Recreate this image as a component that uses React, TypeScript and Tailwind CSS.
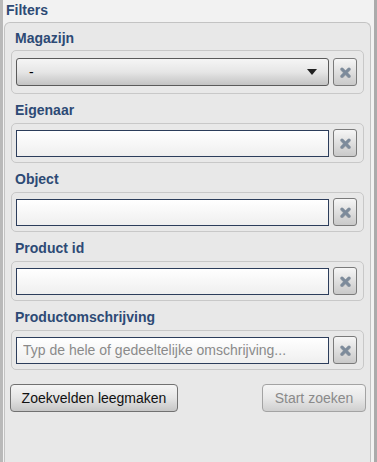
import React from 'react'

const fields = [
    { label: "Eigenaar", placeholder: "" },
    { label: "Object", placeholder: "" },
    { label: "Product id", placeholder: "" },
    { label: "Productomschrijving", placeholder: "Typ de hele of gedeeltelijke omschrijving..." },
]

const ClearButton = () => (
    <button className="flex h-[28px] w-[24px] shrink-0 items-center justify-center rounded-[3px] border border-[#7a7a7a] bg-gradient-to-b from-[#f6f6f6] to-[#c9c9c9]">
        <svg width="11" height="11" viewBox="0 0 11 11">
            <path d="M2 2 L9 9 M9 2 L2 9" stroke="#3d4a58" strokeOpacity="0.35" strokeWidth="3.4" strokeLinecap="round" transform="translate(0 0.6)" />
            <path d="M2 2 L9 9 M9 2 L2 9" stroke="#7d8b9b" strokeWidth="3" strokeLinecap="round" />
        </svg>
    </button>
)

const App = () => {
    return (
        <div className="flex h-[462px] w-[377px] overflow-hidden bg-[#f2f2f2] font-['Liberation_Sans',Arial,sans-serif]">
            {/* left edge */}
            <div className="w-[3px] shrink-0 bg-[#b9b9b9]" />

            <div className="flex w-[369px] shrink-0 flex-col">
                <div className="h-[22px] pl-[3px] pt-[2px] text-[14px] font-bold leading-[16px] text-[#2d4a75]">Filters</div>

                <div className="ml-[1px] flex w-[367px] flex-1 flex-col rounded-t-[6px] border border-b-0 border-[#c3c3c3] bg-[#e8e8e8] px-[6px]">
                    {/* Magazijn */}
                    <div className="h-[27px] pl-[4px] pt-[7px] text-[14px] font-bold leading-[16px] text-[#2d4a75]">Magazijn</div>
                    <div className="flex h-[44px] items-center gap-[4px] rounded-[5px] border border-[#c8c8c8] px-[4px]">
                        <div className="flex h-[28px] w-[313px] items-center justify-between rounded-[3px] border border-[#5a5a5a] bg-gradient-to-b from-[#f5f5f5] via-[#e6e6e6] to-[#c3c3c3] pl-[12px] pr-[11px] text-[14px] text-black">
                            <span>-</span>
                            <svg width="10" height="6" viewBox="0 0 10 6">
                                <path d="M0 0 H10 L5 6 Z" fill="#222" />
                            </svg>
                        </div>
                        <ClearButton />
                    </div>

                    {fields.map(f => (
                        <div key={f.label}>
                            <div className="h-[29px] pl-[4px] pt-[8px] text-[14px] font-bold leading-[16px] text-[#2d4a75]">{f.label}</div>
                            <div className="flex h-[40px] items-center gap-[4px] rounded-[5px] border border-[#c8c8c8] px-[4px]">
                                <input
                                    readOnly
                                    placeholder={f.placeholder}
                                    className="h-[27px] w-[313px] border border-[#2c3d5b] bg-gradient-to-b from-white to-[#efefef] px-[6px] text-[14px] outline-none placeholder:text-[#8a8a8a]"
                                />
                                <ClearButton />
                            </div>
                        </div>
                    ))}

                    {/* Actions */}
                    <div className="mt-[14px] flex justify-between pl-[-1px] pr-[-2px]">
                        <button className="-ml-[1px] h-[28px] w-[168px] rounded-[4px] border border-[#717171] bg-gradient-to-b from-[#f5f5f5] via-[#e4e4e4] to-[#c6c6c6] text-[14px] text-[#111]">
                            Zoekvelden leegmaken
                        </button>
                        <button disabled className="-mr-[2px] h-[28px] w-[104px] rounded-[4px] border border-[#a3a3a3] bg-gradient-to-b from-[#f5f5f5] via-[#e8e8e8] to-[#cfcfcf] text-[14px] text-[#8a8a8a]">
                            Start zoeken
                        </button>
                    </div>
                </div>
            </div>

            {/* right splitter */}
            <div className="ml-[2px] flex w-[3px] shrink-0 flex-col bg-[#ababab]" />
            <div className="relative w-[3px] shrink-0 bg-[#ababab]">
                <div className="absolute left-0 top-[370px] flex flex-col gap-[2px]">
                    <div className="h-[2px] w-[1px] bg-[#666]" />
                    <div className="h-[2px] w-[1px] bg-[#666]" />
                    <div className="h-[2px] w-[1px] bg-[#666]" />
                </div>
            </div>
        </div>
    )
}

export default App
